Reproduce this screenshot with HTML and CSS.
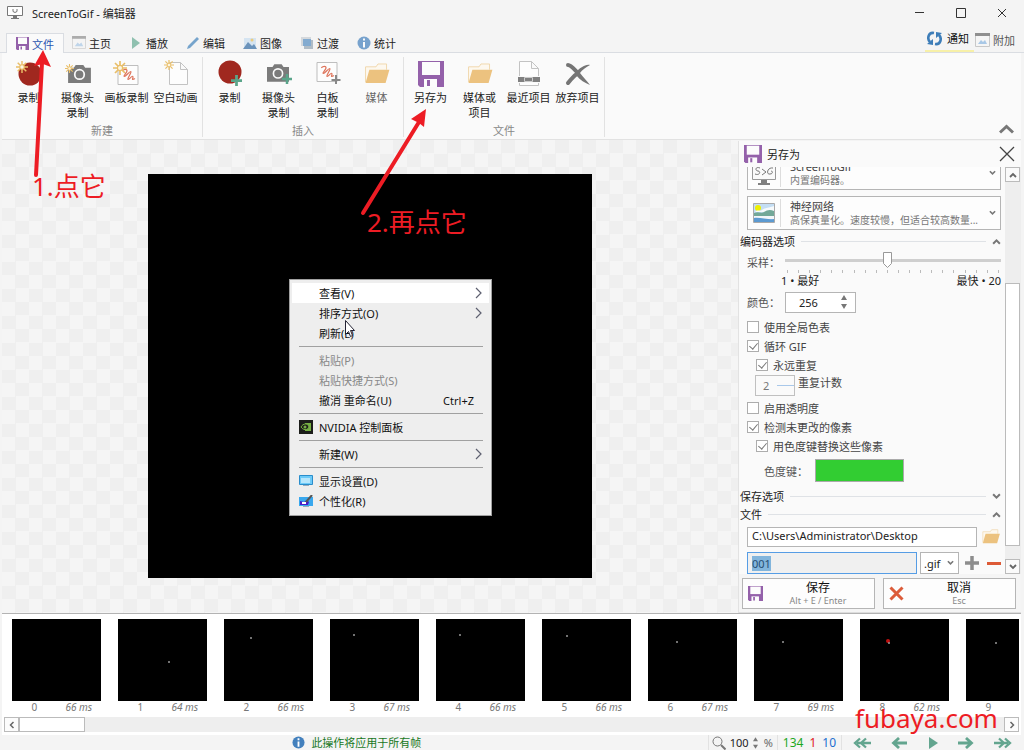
FILE: index.html
```html
<!DOCTYPE html>
<html lang="zh-CN">
<head>
<meta charset="utf-8">
<title>ScreenToGif - 编辑器</title>
<link rel="stylesheet" href="styles.css">
</head>
<body>
<svg class="defs" aria-hidden="true">
  <defs>
    <symbol id="floppy" viewBox="0 0 26 26"><path fill="#9461aa" d="M0 0h26v26H2l-2-2z"/><path fill="#fcfcfc" d="M4 1h18v13H4z"/><path fill="#fcfcfc" d="M6 18h13v8H6z"/><path fill="#9461aa" d="M9 19h3v6H9z"/></symbol>
    <symbol id="star" viewBox="0 0 14 14"><g stroke="#e9be68" stroke-width="1.7"><path d="M7 0v14M0 7h14M2 2l10 10M12 2L2 12"/></g><circle cx="7" cy="7" r="2.6" fill="#fdf6e3" stroke="#e9be68" stroke-width="1.2"/></symbol>
    <symbol id="plus" viewBox="0 0 12 12"><path fill="currentColor" d="M4.500 0h3v4.500H12v3H7.500V12h-3V7.500H0v-3h4.500z"/></symbol>
    <symbol id="camera" viewBox="0 0 24 20"><path fill="#7b7b7b" d="M0 4h6l2-3h8l2 3h6v16H0z"/><circle cx="12" cy="11" r="5" fill="none" stroke="#fafafa" stroke-width="1.800"/></symbol>
    <symbol id="folder" viewBox="0 0 26 22"><path fill="#fdf8ef" stroke="#f0d7ac" d="M1 20V4h11l2-3h9v6"/><path fill="#ecc27f" d="M5 7h21l-4 14H1z"/></symbol>
    <symbol id="scribble" viewBox="0 0 22 21"><path fill="#fdfdfd" stroke="#b9b9b9" d="M.5.5h21v20H.5z"/><path fill="none" stroke="#de745b" stroke-width="1.300" d="M5 6c2-2 5-2 5 0S6 11 7 12s6-6 7-5-4 7-3 8 4-4 5-3-1 3 0 3 2 0 2-1"/></symbol>
    <symbol id="down" viewBox="0 0 8 6"><path fill="none" stroke="currentColor" stroke-width="1.800" d="M1 1l3 3 3-3"/></symbol>
    <symbol id="up" viewBox="0 0 8 6"><path fill="none" stroke="currentColor" stroke-width="1.800" d="M1 5l3-3 3 3"/></symbol>
    <symbol id="info" viewBox="0 0 14 14"><circle cx="7" cy="7" r="6.500" fill="#4380bd"/><path fill="#fff" d="M6 6h2v5.500H6zM6 2.500h2v2H6z"/></symbol>
    <symbol id="window" viewBox="0 0 15 14"><path fill="#f5f5f5" stroke="#c8c8c8" d="M.5.5h14v13H.5z"/><path fill="#8f8f8f" d="M0 0h15v3H0z"/><path fill="#a9c8e6" d="M3 11l3-4 2 2 2-2 2 4z"/></symbol>
    <symbol id="arrow" viewBox="0 0 16 12"><path fill="none" stroke="#63a58f" stroke-width="2.800" d="M0 6h13M8 1l5.500 5L8 11"/></symbol>
    <symbol id="arrows" viewBox="0 0 18 12"><path fill="none" stroke="#63a58f" stroke-width="2.300" d="M0 6h14M5 1.500L10 6l-5 4.500M11 1.500L16 6l-5 4.500"/></symbol>
    <symbol id="next" viewBox="0 0 7 12"><path fill="none" stroke="#5e6070" stroke-width="1.200" d="M1 1l5 5-5 5"/></symbol>
    <symbol id="spin" viewBox="0 0 6 14"><path fill="#777" d="M3 0l3 5H0zM0 9h6l-3 5z"/></symbol>
  </defs>
</svg>

<div class="app">
  <header class="titlebar">
    <svg class="logo" width="16" height="13" viewBox="0 0 16 13"><path fill="#fff" stroke="#777" d="M.5.5h15v9H.5z"/><path fill="none" stroke="#777" d="M6 3v2.500q2 2 4 0V3"/><path fill="#777" d="M6 10h4v2h2v1H4v-1h2z"/></svg>
    <h1>ScreenToGif - 编辑器</h1>
    <div class="winbtns">
      <button aria-label="最小化"><svg width="10" height="10"><path stroke="#333" d="M0 4.500h9"/></svg></button>
      <button aria-label="最大化"><svg width="10" height="10"><path fill="none" stroke="#333" d="M.5.5h9v9h-9z"/></svg></button>
      <button aria-label="关闭"><svg width="10" height="10"><path stroke="#333" d="M1 1l8 8M9 1L1 9"/></svg></button>
    </div>
  </header>

  <nav class="tabs">
    <button class="tab active"><svg width="13" height="13"><use href="#floppy"/></svg>文件</button>
    <button class="tab"><svg class="soft" width="14" height="13"><use href="#window"/></svg>主页</button>
    <button class="tab"><svg width="14" height="14" viewBox="0 0 14 14"><path fill="#8fc0af" d="M3 1l8 6-8 6z"/></svg>播放</button>
    <button class="tab"><svg width="14" height="14" viewBox="0 0 14 14"><path fill="#76a4cc" d="M11 1l2 2-9 9-3 1 1-3z"/></svg>编辑</button>
    <button class="tab"><svg width="14" height="14" viewBox="0 0 14 14"><path fill="#d5e4f1" d="M1 2h12v10H1z"/><path fill="#6b93bb" d="M0 13l5-7 4 4 2-2 3 5z"/><circle cx="9" cy="4" r="1.500" fill="#ebcc80"/></svg>图像</button>
    <button class="tab"><svg width="14" height="14" viewBox="0 0 14 14"><path fill="#d4d8dc" d="M1 1h10v9H1z"/><path fill="#b0bcc6" d="M4 4h9v9H4z"/><path fill="#83abd0" d="M3 3h8v7H3z"/></svg>过渡</button>
    <button class="tab"><svg width="14" height="14" class="soft"><use href="#info"/></svg>统计</button>
    <div class="extras">
      <button class="extra notice"><svg width="15" height="15" viewBox="0 0 15 15"><path fill="none" stroke="#3d7db8" stroke-width="2.600" d="M7 2C1 1 0 8 3 11M8 13c6 1 7-6 4-9"/><path fill="#3d7db8" d="M0 13l6 1V8zM15 2L9 1v6z"/></svg>通知</button>
      <button class="extra"><svg width="15" height="14"><use href="#window"/></svg>附加</button>
    </div>
  </nav>

  <section class="ribbon">
    <div class="group">
      <div class="tools">
        <button class="tool"><svg width="30" height="28" viewBox="0 0 30 28"><circle cx="16" cy="14" r="11.500" fill="#a0281f"/><use href="#star" x="2" y="1" width="12" height="12"/></svg>录制</button>
        <button class="tool"><svg width="30" height="28" viewBox="0 0 30 28"><use href="#camera" x="5" y="4" width="23" height="19"/><use href="#star" x="2" y="4" width="9" height="9"/></svg>摄像头<br>录制</button>
        <button class="tool"><svg width="30" height="28" viewBox="0 0 30 28"><use href="#scribble" x="5" y="5" width="22" height="20"/><use href="#star" x="1" y="1" width="14" height="14"/></svg>画板录制</button>
        <button class="tool"><svg width="30" height="28" viewBox="0 0 30 28"><path fill="#fdfdfd" stroke="#c3c3c3" d="M8.500 2.500h11l7 7v15h-18zM19.500 2.500v7h7"/><use href="#star" x="3" y="0" width="10" height="10"/></svg>空白动画</button>
      </div>
      <div class="caption">新建</div>
    </div>
    <div class="group">
      <div class="tools">
        <button class="tool"><svg width="30" height="28" viewBox="0 0 30 28"><circle cx="15" cy="12" r="11.500" fill="#a0281f"/><use href="#plus" class="green" x="16" y="15" width="11" height="11"/></svg>录制</button>
        <button class="tool"><svg width="30" height="28" viewBox="0 0 30 28"><use href="#camera" x="3" y="3" width="22" height="19"/><use href="#plus" class="green" x="18" y="14" width="10" height="10"/></svg>摄像头<br>录制</button>
        <button class="tool"><svg width="30" height="28" viewBox="0 0 30 28"><use href="#scribble" x="3" y="2" width="22" height="20"/><path stroke="#888" stroke-width="2" d="M23 15v9M18.500 20h9"/></svg>白板<br>录制</button>
        <button class="tool muted"><svg width="30" height="28" viewBox="0 0 30 28"><use href="#folder" x="2" y="3" width="26" height="21"/></svg>媒体</button>
      </div>
      <div class="caption">插入</div>
    </div>
    <div class="group">
      <div class="tools">
        <button class="tool"><svg width="30" height="28" viewBox="0 0 30 28"><use href="#floppy" x="2" y="1" width="26" height="26"/></svg>另存为</button>
        <button class="tool"><svg width="30" height="28" viewBox="0 0 30 28"><use href="#folder" x="2" y="3" width="26" height="21"/></svg>媒体或<br>项目</button>
        <button class="tool"><svg width="30" height="28" viewBox="0 0 30 28"><path fill="#fdfdfd" stroke="#c3c3c3" d="M5.500 1.500h12l7 7v17h-19zM17.500 1.500v7h7"/><path fill="#fafafa" d="M4 16h22v7H4z"/><path fill="#808080" d="M4 17h22v5H4z"/><path fill="none" stroke="#ccc" d="M10.500 17.500h8v4h-8z"/></svg>最近项目</button>
        <button class="tool"><svg width="30" height="28" viewBox="0 0 30 28"><path fill="none" stroke="#757575" stroke-width="4" stroke-linecap="round" d="M5 5c3 0 6 4 10 8M5 23c3-3 5-7 10-10"/><path fill="#757575" d="M12 13C17 8 22 4 27 5c-4 2-8 5-10 8 3 4 7 8 10 12-5-2-10-5-14-10z"/></svg>放弃项目</button>
      </div>
      <div class="caption">文件</div>
    </div>
    <button class="collapse" aria-label="收起"><svg width="15" height="10" viewBox="0 0 15 10"><path fill="none" stroke="#777" stroke-width="3" d="M1 8.500l6.500-6 6.500 6"/></svg></button>
  </section>

  <main class="work">
    <div class="stage"><div class="frame"></div></div>

    <aside class="panel">
      <div class="panelhead">
        <svg width="18" height="18"><use href="#floppy"/></svg>
        <h2>另存为</h2>
        <button aria-label="关闭面板"><svg width="16" height="16"><path stroke="#444" stroke-width="1.300" d="M1 1l14 14M15 1L1 15"/></svg></button>
      </div>
      <div class="scroller">
        <div class="options">
          <div class="combo">
            <svg class="comboicon" width="26" height="26" viewBox="0 0 26 26"><path fill="#fafafa" stroke="#999" d="M1.500 1.500h23v18h-23z"/><path fill="none" stroke="#777" d="M9 8c-5-2-5 3-2 3s2 5-3 3M11 9l4 3-4 3M22 8c-6-1-7 7-3 6 3 0 3-3 1-3"/><path fill="#808080" d="M10 20h6v3h3v2H7v-2h3z"/></svg>
            <div class="combotext"><select aria-label="编码器"><option>ScreenToGif</option></select><span>内置编码器。</span></div>
            <svg class="chev" width="7" height="6"><use href="#down"/></svg>
          </div>
          <div class="combo">
            <svg class="comboicon" width="22" height="20" viewBox="0 0 22 20"><path fill="#c4def4" stroke="#aaa" d="M.5.5h21v19H.5z"/><circle cx="5" cy="5" r="3" fill="#eff000"/><path fill="#f6fafc" d="M2 9c3-3 5 0 7-2s6-2 12-4v6z"/><path fill="#72a898" d="M1 10c5-2 7 1 10-1s6-3 10-1v5H1z"/><path fill="#f2f6f9" d="M1 13h20v3H1z"/><path fill="#5c9ad1" d="M1 15c6-1 12 2 20 1v3H1z"/></svg>
            <div class="combotext"><select aria-label="量化器"><option>神经网络</option></select><span>高保真量化。速度较慢，但适合较高数量...</span></div>
            <svg class="chev" width="7" height="6"><use href="#down"/></svg>
          </div>
          <button class="expander">编码器选项<i></i><svg width="9" height="7"><use href="#up"/></svg></button>
          <div class="row sampling">
            <label for="sampling">采样：</label>
            <div class="slider"><input id="sampling" type="range" min="1" max="20" value="10">
              <div class="ticks"><i></i><i></i><i></i><i></i><i></i><i></i><i></i><i></i><i></i><i></i><i></i><i></i><i></i><i></i><i></i><i></i><i></i><i></i><i></i><i></i></div>
            </div>
          </div>
          <div class="ends"><span>1 • 最好</span><span>最快 • 20</span></div>
          <div class="row colors"><label for="colors">颜色：</label><div class="number"><input id="colors" type="number" value="256"><svg width="6" height="14"><use href="#spin"/></svg></div></div>
          <label class="check"><input type="checkbox">使用全局色表</label>
          <label class="check"><input type="checkbox" checked>循环 GIF</label>
          <label class="check sub"><input type="checkbox" checked>永远重复</label>
          <div class="row repeat"><div class="count"><input id="repeat" type="number" value="2"><i></i></div><label for="repeat">重复计数</label></div>
          <label class="check"><input type="checkbox">启用透明度</label>
          <label class="check"><input type="checkbox" checked>检测未更改的像素</label>
          <label class="check sub"><input type="checkbox" checked>用色度键替换这些像素</label>
          <div class="row chroma"><span>色度键：</span><button class="swatch" aria-label="色度键颜色"></button></div>
          <button class="expander">保存选项<i></i><svg width="9" height="7"><use href="#down"/></svg></button>
          <button class="expander">文件<i></i><svg width="9" height="7"><use href="#up"/></svg></button>
          <div class="row path"><input type="text" aria-label="文件夹" value="C:\Users\Administrator\Desktop"><button aria-label="浏览"><svg width="18" height="15"><use href="#folder"/></svg></button></div>
          <div class="row name">
            <input id="filename" type="text" aria-label="文件名" value="001">
            <div class="ext"><select aria-label="扩展名"><option>.gif</option></select><svg class="chev" width="7" height="6"><use href="#down"/></svg></div>
            <button aria-label="增加"><svg class="grey" width="14" height="14"><use href="#plus"/></svg></button>
            <button aria-label="减少"><svg width="14" height="14"><path fill="#dd5a36" d="M0 6h14v3H0z"/></svg></button>
          </div>
        </div>
        <div class="vscroll">
          <button aria-label="向上"><svg width="8" height="6"><use href="#up"/></svg></button>
          <div class="vtrack"><div class="vthumb"></div></div>
          <button aria-label="向下"><svg width="8" height="6"><use href="#down"/></svg></button>
        </div>
      </div>
      <div class="actions">
        <button class="action"><svg width="15" height="15"><use href="#floppy"/></svg><span>保存<small>Alt + E / Enter</small></span></button>
        <button class="action"><svg width="15" height="15" viewBox="0 0 15 15"><path stroke="#dc5c3a" stroke-width="3" d="M1.500 1.500l12 12M13.500 1.500l-12 12"/></svg><span>取消<small>Esc</small></span></button>
      </div>
    </aside>
  </main>

  <section class="film">
    <div class="frames">
      <figure><svg viewBox="0 0 89 82"></svg><figcaption><span>0</span><em>66 ms</em></figcaption></figure>
      <figure><svg viewBox="0 0 89 82"><circle cx="51" cy="43" r="1"/></svg><figcaption><span>1</span><em>64 ms</em></figcaption></figure>
      <figure><svg viewBox="0 0 89 82"><circle cx="27" cy="19" r="1"/></svg><figcaption><span>2</span><em>66 ms</em></figcaption></figure>
      <figure><svg viewBox="0 0 89 82"><circle cx="24" cy="16" r="1"/></svg><figcaption><span>3</span><em>67 ms</em></figcaption></figure>
      <figure><svg viewBox="0 0 89 82"><circle cx="24" cy="16" r="1"/></svg><figcaption><span>4</span><em>66 ms</em></figcaption></figure>
      <figure><svg viewBox="0 0 89 82"><circle cx="25" cy="17" r="1"/></svg><figcaption><span>5</span><em>66 ms</em></figcaption></figure>
      <figure><svg viewBox="0 0 89 82"><circle cx="29" cy="23" r="1"/></svg><figcaption><span>6</span><em>67 ms</em></figcaption></figure>
      <figure><svg viewBox="0 0 89 82"><circle cx="29" cy="23" r="1"/></svg><figcaption><span>7</span><em>69 ms</em></figcaption></figure>
      <figure><svg viewBox="0 0 89 82"><circle class="hot" cx="28" cy="22" r="2"/><circle cx="29" cy="24" r="1"/></svg><figcaption><span>8</span><em>62 ms</em></figcaption></figure>
      <figure><svg viewBox="0 0 89 82"><circle cx="30" cy="24" r="1"/></svg><figcaption><span>9</span></figcaption></figure>
    </div>
    <div class="hscroll">
      <button aria-label="向左"><svg width="6" height="8" viewBox="0 0 6 8"><path fill="none" stroke="#666" stroke-width="1.500" d="M4.500 1l-3 3 3 3"/></svg></button>
      <div class="hthumb"></div>
      <button class="last" aria-label="向右"><svg width="6" height="8" viewBox="0 0 6 8"><path fill="none" stroke="#666" stroke-width="1.500" d="M1.500 1l3 3-3 3"/></svg></button>
    </div>
  </section>

  <footer class="status">
    <p><svg width="13" height="13"><use href="#info"/></svg>此操作将应用于所有帧</p>
    <div class="zoom"><svg width="14" height="14" viewBox="0 0 14 14"><circle cx="5.500" cy="5.500" r="4.500" fill="none" stroke="#777"/><path stroke="#777" stroke-width="2" d="M9 9l4.500 4.500"/></svg><span>100</span><svg width="5" height="12"><use href="#spin"/></svg><span class="pct">%</span></div>
    <div class="counts"><span class="total">134</span><span class="sel">1</span><span class="cur">10</span></div>
    <div class="player">
      <button aria-label="第一帧"><svg class="flip" width="18" height="12"><use href="#arrows"/></svg></button>
      <button aria-label="上一帧"><svg class="flip" width="16" height="12"><use href="#arrow"/></svg></button>
      <button aria-label="播放"><svg width="10" height="12"><path fill="#63a58f" d="M1 0l9 6-9 6z"/></svg></button>
      <button aria-label="下一帧"><svg width="16" height="12"><use href="#arrow"/></svg></button>
      <button aria-label="最后一帧"><svg width="18" height="12"><use href="#arrows"/></svg></button>
    </div>
  </footer>

  <div class="menu" role="menu">
    <button role="menuitem" class="over"><i></i>查看(V)<svg width="7" height="12"><use href="#next"/></svg></button>
    <button role="menuitem"><i></i>排序方式(O)<svg width="7" height="12"><use href="#next"/></svg></button>
    <button role="menuitem"><i></i>刷新(E)</button>
    <hr>
    <button role="menuitem" disabled><i></i>粘贴(P)</button>
    <button role="menuitem" disabled><i></i>粘贴快捷方式(S)</button>
    <button role="menuitem"><i></i>撤消 重命名(U)<kbd>Ctrl+Z</kbd></button>
    <hr>
    <button role="menuitem"><i><svg width="14" height="14" viewBox="0 0 14 14"><path fill="#1c1e1a" d="M0 0h14v14H0z"/><path fill="#76b043" d="M6 3h6v8H6z"/><path fill="#1c1e1a" stroke="#76b043" d="M2 7c2-4 7-4 8 0-2 4-6 3-8 0z"/><circle cx="6" cy="7" r="1.500" fill="#76b043"/></svg></i>NVIDIA 控制面板</button>
    <hr>
    <button role="menuitem"><i></i>新建(W)<svg width="7" height="12"><use href="#next"/></svg></button>
    <hr>
    <button role="menuitem"><i><svg width="14" height="12" viewBox="0 0 14 12"><path fill="#6ccaf8" stroke="#2a8dcb" d="M.5.5h13v9H.5z"/><path fill="#b6e6fc" d="M2 3h9v5H2z"/><path fill="#9ab" d="M4 10h6v1H4z"/></svg></i>显示设置(D)</button>
    <button role="menuitem"><i><svg width="14" height="13" viewBox="0 0 14 13"><path fill="#39a8ee" d="M0 2h14v9H0z"/><path fill="#4a1cc9" d="M1 6l4 1 3-2 2 2-1 3H1z"/><path stroke="#555" stroke-width="2" d="M7 7l6-7"/><path fill="#fff" d="M3 7h4v2H3z"/><path fill="#9ab" d="M4 11h6v1H4z"/></svg></i>个性化(R)</button>
  </div>

  <svg class="marks" width="500" height="350" viewBox="0 0 500 350" aria-hidden="true">
    <path fill="none" stroke="#ed1c24" stroke-width="4" stroke-linecap="round" d="M36 175l6-112"/>
    <path fill="#ed1c24" d="M43 50l8 17-8-3-9 2z"/>
    <path stroke="#ed1c24" stroke-width="4" stroke-linecap="round" d="M363 213l56-91"/>
    <path fill="#ed1c24" d="M426 109l-2 18-5-4-8-4z"/>
    <path fill="#fff" stroke="#223" d="M345.500 320.500v14l3-3 2 5 2-1-2-5h4z"/>
  </svg>
  <p class="note first">1.点它</p>
  <p class="note second">2.再点它</p>
  <p class="brand">fubaya.com</p>
</div>
<script src="app.js"></script>
</body>
</html>
```
FILE: styles.css
```css
* { box-sizing: border-box; }
body, h1, h2, p, figure { margin: 0; }
body, button, input, select {
  font-family: "Noto Sans", "Noto Sans CJK SC", sans-serif;
  font-size: 11px;
  color: #222;
}
button { border: 0; padding: 0; background: none; }
input, select { border: 0; margin: 0; padding: 0; background: none; outline: 0; min-width: 0; }
select { appearance: none; }
input[type="number"] { appearance: textfield; }
input::-webkit-inner-spin-button { display: none; }
svg { display: block; flex: none; }
i { font-style: normal; }
.defs { position: absolute; width: 0; height: 0; }
.green { color: #5aa58a; }
.grey { color: #8d8d8d; }
.soft { opacity: .7; }
.flip { transform: scaleX(-1); }

.app {
  position: relative;
  display: flex;
  flex-direction: column;
  height: 100vh;
  overflow: hidden;
  background: #f4f4f4;
}

.titlebar { display: flex; align-items: center; height: 27px; padding: 0 2px 2px 7px; gap: 9px; }
.titlebar h1 { flex: 1; font-size: 11px; font-weight: 400; }
.winbtns { display: flex; }
.winbtns button { width: 41px; height: 25px; display: grid; place-items: center; }

.tabs { display: flex; align-items: flex-end; height: 26px; padding-left: 6px; border-bottom: 1px solid #dadde2; }
.tab { display: flex; align-items: center; gap: 3px; height: 19px; padding: 0 9px 0 8px; width: 57px; white-space: nowrap; }
.tab.active { width: 58px; padding-left: 9px; border: 1px solid #dadde2; border-bottom: 0; background: #fafafa; color: #2c55b0; height: 20px; margin-bottom: -1px; }
.extras { display: flex; align-items: center; margin-left: auto; height: 24px; padding-right: 9px; gap: 1px; }
.extra { display: flex; align-items: center; gap: 3px; height: 24px; color: #555; }
.notice { gap: 5px; padding: 0 5px 2px 2px; border-bottom: 2px solid #f7f0a8; color: #111; }

.ribbon { display: flex; height: 87px; margin: 0 3px 0 2px; background: #fafafa; border-bottom: 1px solid #e2e2e2; }
.group { width: 201px; padding: 0 2px; margin: 4px 0 2px; border-right: 1px solid #e2e2e2; display: flex; flex-direction: column; }
.tools { display: flex; flex: 1; }
.tool { width: 49px; display: flex; flex-direction: column; align-items: center; justify-content: flex-start; padding-top: 3px; line-height: 15px; white-space: nowrap; }
.tool svg { margin-bottom: 2px; }
.tool.muted { color: #666; }
.caption { text-align: center; color: #888; line-height: 13px; }
.collapse { margin: auto 7px 5px auto; }

.work { flex: 1; min-height: 0; display: flex; margin: 0 3px 0 2px; }
.stage { flex: 1; display: grid; place-items: center; padding-bottom: 1px; background: conic-gradient(#efefef 25%, #f5f5f5 0 50%, #efefef 0 75%, #f5f5f5 0) 0 0 / 27px 27px; }
.frame { width: 444px; height: 404px; background: #000; }

.panel { width: 283px; display: flex; flex-direction: column; margin-top: 1px; background: #fafafa; border-left: 1px solid #e2e2e2; }
.panelhead { display: flex; align-items: center; gap: 5px; height: 26px; padding: 0 6px 0 5px; }
.panelhead h2 { flex: 1; font-size: 11px; font-weight: 400; }
.scroller { flex: 1; min-height: 0; display: flex; }
.options { flex: 1; min-width: 0; display: flex; flex-direction: column; justify-content: flex-end; overflow: hidden; padding: 0 4px 0 1px; }
.options > * { flex: none; }
.combo { display: flex; align-items: center; height: 34px; margin: 0 0 6px 7px; padding-right: 4px; border: 1px solid #b5b5b5; background: #fdfdfd; }
.combo + .expander { margin-top: -4px; }
.comboicon { margin: 0 auto; }
.combotext { width: 209px; display: flex; flex-direction: column; border-left: 1px solid #ddd; padding-left: 9px; height: 28px; }
.combotext select { height: 15px; line-height: 15px; color: #444; }
.combotext span { font-size: 10px; line-height: 12px; color: #777; white-space: nowrap; }
.chev { color: #777; }
.expander { display: flex; align-items: center; gap: 6px; height: 18px; color: #222; }
.expander i { flex: 1; height: 1px; background: #dfe2e6; }
.expander svg { color: #777; }
.row { display: flex; align-items: center; padding-left: 7px; color: #555; }
.sampling { height: 24px; }
.sampling label, .colors label { width: 38px; }
.slider { flex: 1; padding-top: 1px; }
.slider input { appearance: none; display: block; width: 100%; height: 17px; }
.slider input::-webkit-slider-runnable-track { height: 3px; background: #cfcfcf; }
.slider input::-webkit-slider-thumb { appearance: none; width: 9px; height: 16px; margin-top: -7px; background: url("data:image/svg+xml,%3Csvg xmlns='http://www.w3.org/2000/svg' width='9' height='16'%3E%3Cpath fill='%23fff' stroke='%23999' d='M.5.5h8v11l-4 4-4-4z'/%3E%3C/svg%3E"); }
.ticks { display: flex; justify-content: space-between; padding: 1px 2px 0; }
.ticks i { width: 1px; height: 3px; background: #bbb; }
.ends { display: flex; justify-content: space-between; padding-left: 41px; line-height: 13px; }
.colors { height: 30px; }
.number { display: flex; align-items: center; width: 71px; height: 21px; padding: 0 8px 0 13px; border: 1px solid #b5b5b5; background: #fff; }
.number input { flex: 1; }
.check { display: flex; align-items: center; gap: 5px; height: 19px; padding-left: 7px; color: #444; }
.check.sub { padding-left: 16px; }
.check input { appearance: none; display: grid; place-items: center; width: 12px; height: 12px; border: 1px solid #adadad; background: #fff; }
.check input:checked::before { content: ""; width: 4px; height: 7px; margin-bottom: 2px; border: solid #777; border-width: 0 1px 1px 0; transform: rotate(40deg); }
.repeat { height: 24px; padding-left: 15px; gap: 3px; align-items: flex-start; color: #444; }
.count { display: flex; align-items: center; width: 40px; height: 21px; padding-left: 7px; border: 1px solid #c0c0c0; margin-top: 1px; }
.count input { width: 14px; color: #777; }
.count i { flex: 1; height: 1px; background: #a9c8ea; }
.chroma { height: 31px; padding-left: 24px; margin-bottom: 1px; }
.chroma span { width: 51px; }
.swatch { width: 89px; height: 23px; background: #32cd32; border: 1px solid #aaa; }
.path { gap: 5px; height: 25px; padding-right: 1px; margin-top: 1px; }
.path input { flex: 1; height: 20px; padding: 0 4px 2px; border: 1px solid #b5b5b5; background: #fff; }
.name { height: 25px; gap: 3px; align-items: flex-end; }
.name > input { flex: 1; height: 22px; padding: 0 4px; border: 1px solid #569de5; background: #f0f0f0; }
.name > input::selection { background: #82b5dc; color: #274f73; }
.ext { display: flex; align-items: center; width: 39px; height: 22px; padding: 0 4px 0 3px; border: 1px solid #b5b5b5; background: #fff; }
.ext select { flex: 1; }
.name button { margin: 0 0 4px 3px; }
.name button:last-child { margin-left: 5px; }
.vscroll { width: 16px; display: flex; flex-direction: column; background: #eee; padding-right: 1px; }
.vscroll button { height: 15px; border: 1px solid #bbb; background: #fafafa; display: grid; place-items: center; color: #666; }
.vtrack { flex: 1; display: flex; flex-direction: column; }
.vthumb { height: 263px; margin: auto 0 13px; border: 1px solid #bbb; background: #fff; }
.actions { display: grid; grid-template-columns: 1fr 1fr; gap: 8px; height: 39px; padding: 4px 5px 3px 3px; background: #f5f5f5; border-bottom: 1px solid #ddd; }
.action { display: flex; align-items: center; padding: 0 1px 0 5px; border: 1px solid #b5b5b5; background: #fdfdfd; }
.action span { flex: 1; font-size: 12px; line-height: 15px; color: #111; }
.action small { display: block; font-size: 9px; line-height: 12px; color: #888; }

.film { background: #fff; border-top: 1px solid #b3b3b3; padding-bottom: 3px; margin: 0 3px 0 2px; }
.frames { display: flex; gap: 17px; margin-right: 2px; padding: 5px 0 4px 10px; overflow: hidden; }
figure { flex: none; width: 89px; }
figure svg { width: 89px; height: 82px; background: #000; }
figure circle { fill: #999; }
figure .hot { fill: #c01010; }
figcaption { display: grid; grid-template-columns: 1fr 1fr; text-align: center; line-height: 12px; font-size: 10px; color: #777; }
.hscroll { display: flex; background: #eee; height: 15px; margin: 0 2px; }
.hscroll button { width: 15px; border: 1px solid #bbb; background: #fcfcfc; display: grid; place-items: center; }
.hscroll .last { margin-left: auto; }
.hthumb { width: 66px; border: 1px solid #bbb; background: #fff; }

.status { display: flex; align-items: center; height: 15px; padding-right: 12px; line-height: 15px; }
.status p { flex: 1; display: flex; align-items: center; justify-content: center; gap: 6px; padding-left: 6px; color: #18781d; }
.zoom { display: flex; align-items: center; gap: 4px; border-left: 1px solid #e2e2e2; padding: 0 4px 0 3px; }
.zoom .pct { color: #666; padding-left: 2px; }
.counts { display: flex; gap: 6px; font-size: 12px; padding: 0 5px; border: solid #e2e2e2; border-width: 0 1px; }
.total { color: #1da81d; }
.sel { color: #e02020; }
.cur { color: #1c6fd0; }
.player { display: flex; align-items: center; justify-content: space-between; width: 159px; margin-left: 11px; }

.menu { position: absolute; left: 289px; top: 279px; width: 203px; padding: 3px 2px 4px; border: 1px solid #a0a0a0; background: #eee; display: flex; flex-direction: column; }
.menu button { display: flex; align-items: center; height: 20px; padding: 0 7px 0 7px; color: #111; }
.menu i { width: 20px; }
.menu button > svg, .menu kbd { margin-left: auto; }
.menu kbd { font: inherit; padding-right: 8px; }
.menu .over { background: #fff; }
.menu button:disabled { color: #888; }
.menu hr { width: 184px; height: 1px; margin: 3px 7px; border: 0; background: #a0a0a0; }

.marks { position: absolute; left: 0; top: 0; pointer-events: none; }
.note, .brand { position: absolute; color: #ed1c24; white-space: nowrap; line-height: 30px; font-size: 26px; }
.first { left: 32px; top: 171px; }
.second { left: 367px; top: 207px; }
.brand { left: 855px; top: 703px; }
```
FILE: app.js
```js
const filename = document.getElementById("filename");
filename.focus();
filename.select();
```
